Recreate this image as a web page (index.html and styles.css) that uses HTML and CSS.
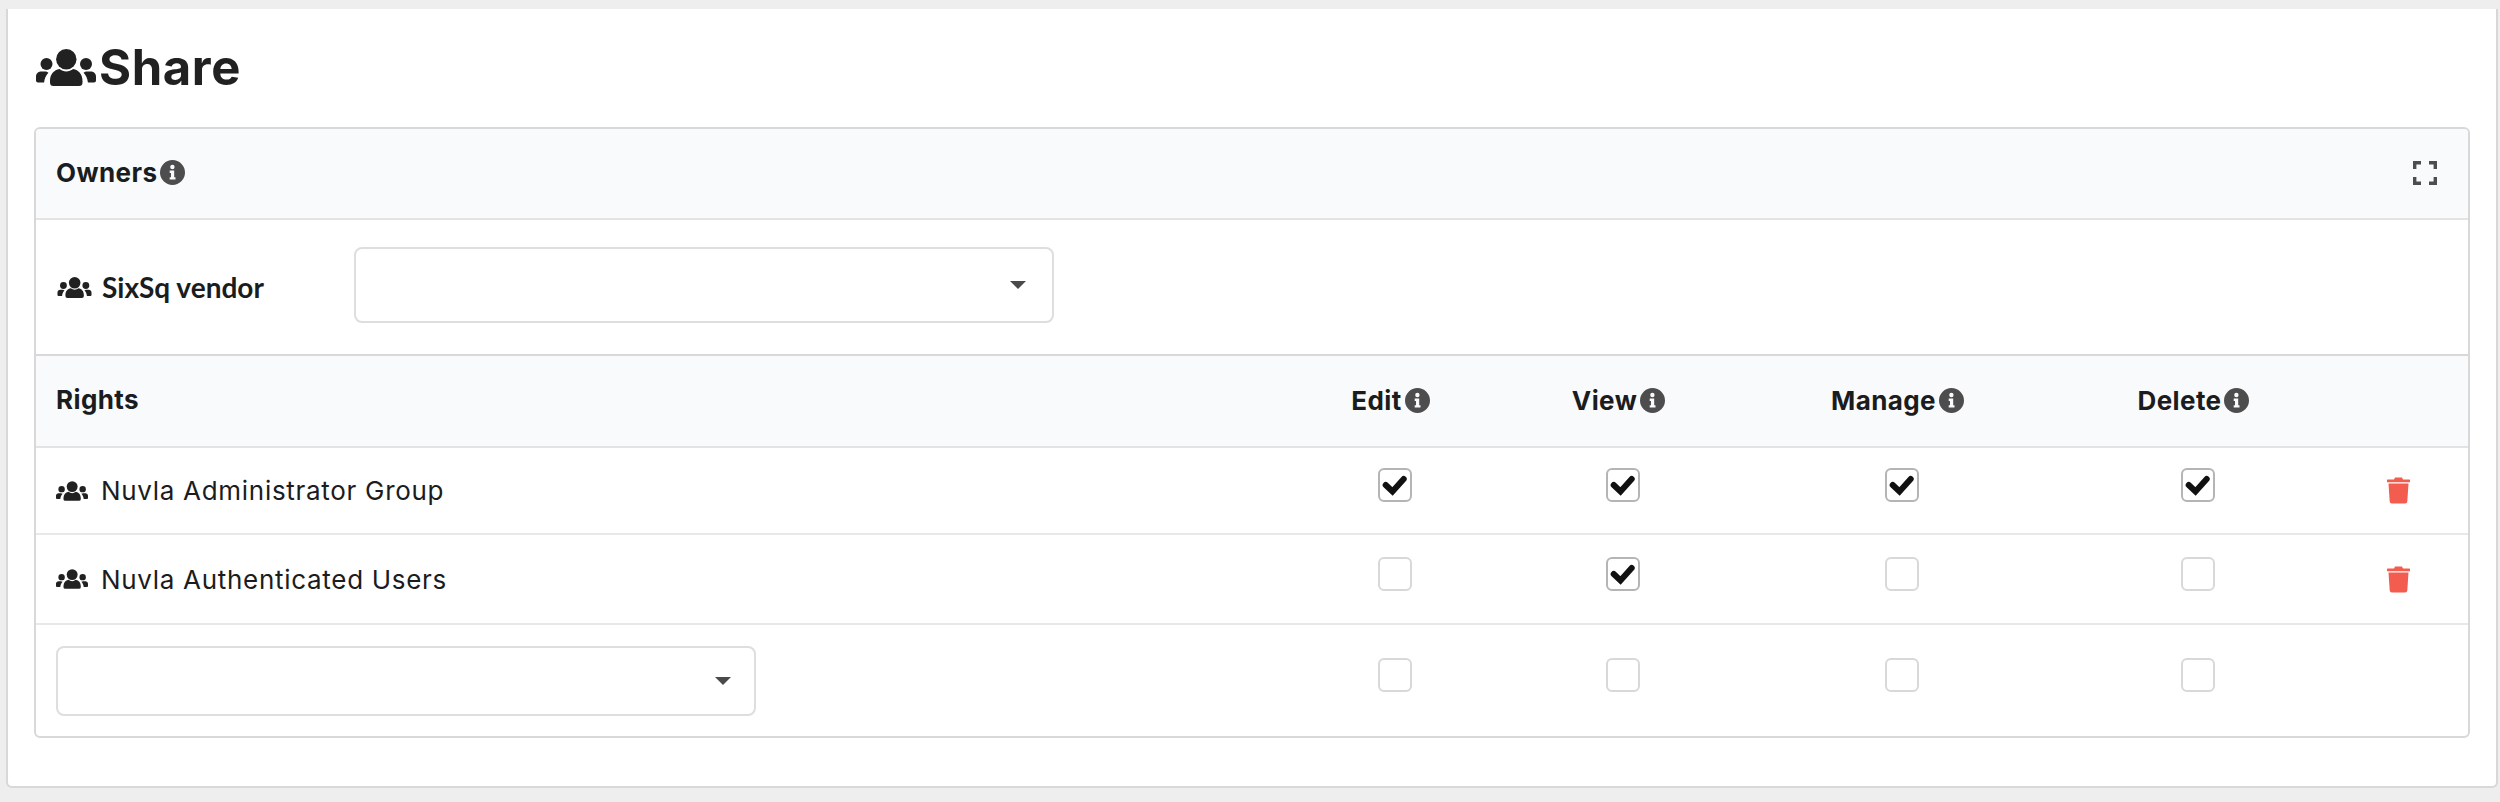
FILE: index.html
```html
<!DOCTYPE html>
<html lang="en">
<head>
<meta charset="utf-8">
<title>Share</title>
<link rel="stylesheet" href="styles.css">
</head>
<body>
<svg class="defs" aria-hidden="true">
  <symbol id="users" viewBox="0 0 60 37">
    <circle cx="30.3" cy="10.2" r="10.2"/>
    <circle cx="10.5" cy="15" r="6"/>
    <circle cx="50" cy="15" r="6"/>
    <path d="M14 32c0-7 4-11 9.500-12 2 1.500 4.300 2.500 6.800 2.500s4.800-1 6.800-2.500c5.500 1 9.400 5 9.400 12v1.500a3.500 3.500 0 0 1-3.500 3.500h-25.500a3.500 3.500 0 0 1-3.500-3.500z"/>
    <path d="M0 27.500c0-2.800 2.200-5 5-5h4c1.300 0 2.500.5 3.400 1.300-2.300 2.400-3.900 5.500-4.300 9.700h-6.100a2 2 0 0 1-2-2z"/>
    <path d="M60 27.500c0-2.800-2.200-5-5-5h-4c-1.300 0-2.500.5-3.400 1.300 2.300 2.400 3.900 5.500 4.300 9.700h6.100a2 2 0 0 0 2-2z"/>
  </symbol>
  <symbol id="info" viewBox="0 0 25 25">
    <path fill-rule="evenodd" d="M12.500 0a12.500 12.500 0 1 1 0 25a12.500 12.500 0 0 1 0-25zM12.400 4.800a2.200 2.200 0 1 0 0 4.400a2.200 2.200 0 0 0 0-4.400zM9.700 10.600v2.300h1.300v4.300h-1.300v2.300h5.800v-2.300h-1.300v-6.600z"/>
  </symbol>
  <symbol id="check" viewBox="0 0 30 30">
    <path d="M5.700 15l6.800 6.500L23.700 9" fill="none" stroke="currentColor" stroke-width="6" stroke-linecap="round" stroke-linejoin="miter"/>
  </symbol>
  <symbol id="trash" viewBox="0 0 23 27">
    <path d="M8 .5h7l1 2h6.200a.8.800 0 0 1 0 2.800H.800a.8.800 0 0 1 0-2.800H7z"/>
    <path d="M1.500 6.500h20l-1.200 18a2.200 2.200 0 0 1-2.200 2H4.900a2.200 2.200 0 0 1-2.200-2z"/>
  </symbol>
</svg>

<main class="card">
  <h1 class="title">
    <svg class="title-icon"><use href="#users"/></svg>
    <span class="title-text">Share</span>
  </h1>

  <section class="segment">
    <header class="segment-head">
      <div class="label-info">
        <strong>Owners</strong>
        <svg class="info"><use href="#info"/></svg>
      </div>
      <svg class="expand" viewBox="0 0 24 24" aria-label="Expand">
        <path d="M1.700 8V1.700H8M16 1.700h6.300V8M22.300 16v6.300H16M8 22.300H1.700V16" fill="none" stroke="currentColor" stroke-width="3.400"/>
      </svg>
    </header>

    <div class="owner-row">
      <div class="owner-name">
        <svg class="owner-icon"><use href="#users"/></svg>
        <span>SixSq vendor</span>
      </div>
      <div class="select select-wide"><i class="caret"></i></div>
    </div>

    <div class="rights">
      <div class="grid head-row">
        <div class="cell-name"><strong>Rights</strong></div>
        <div class="cell-head"><strong>Edit</strong><svg class="info"><use href="#info"/></svg></div>
        <div class="cell-head"><strong>View</strong><svg class="info"><use href="#info"/></svg></div>
        <div class="cell-head"><strong>Manage</strong><svg class="info"><use href="#info"/></svg></div>
        <div class="cell-head"><strong>Delete</strong><svg class="info"><use href="#info"/></svg></div>
        <div></div>
      </div>

      <div class="grid body-row row-a">
        <div class="cell-name"><svg class="row-icon"><use href="#users"/></svg><span>Nuvla Administrator Group</span></div>
        <div class="cell-check"><span class="box on"><svg><use href="#check"/></svg></span></div>
        <div class="cell-check"><span class="box on"><svg><use href="#check"/></svg></span></div>
        <div class="cell-check"><span class="box on"><svg><use href="#check"/></svg></span></div>
        <div class="cell-check"><span class="box on"><svg><use href="#check"/></svg></span></div>
        <div class="cell-trash"><svg class="trash"><use href="#trash"/></svg></div>
      </div>

      <div class="grid body-row row-b">
        <div class="cell-name"><svg class="row-icon"><use href="#users"/></svg><span>Nuvla Authenticated Users</span></div>
        <div class="cell-check"><span class="box"></span></div>
        <div class="cell-check"><span class="box on"><svg><use href="#check"/></svg></span></div>
        <div class="cell-check"><span class="box"></span></div>
        <div class="cell-check"><span class="box"></span></div>
        <div class="cell-trash"><svg class="trash"><use href="#trash"/></svg></div>
      </div>

      <div class="grid body-row row-c">
        <div class="cell-name"><div class="select select-add"><i class="caret"></i></div></div>
        <div class="cell-check"><span class="box"></span></div>
        <div class="cell-check"><span class="box"></span></div>
        <div class="cell-check"><span class="box"></span></div>
        <div class="cell-check"><span class="box"></span></div>
        <div></div>
      </div>
    </div>
  </section>
</main>
</body>
</html>
```

FILE: styles.css
```css
* { box-sizing: border-box; }

html, body { height: 100%; }

body {
  margin: 0;
  padding: 9px 2px 14px 6px;
  background: #eeeeee;
  color: #1b1c1d;
  font-family: "Inter", "Liberation Sans", sans-serif;
  font-size: 26px;
  letter-spacing: 0.7px;
  overflow: hidden;
}

.defs { display: none; }

.card {
  background: #fff;
  border: 2px solid #d8d8d9;
  border-top: 0;
  border-radius: 0 0 6px 6px;
  padding: 36px 26px 48px 26px;
  height: 779px;
}

.title {
  display: flex;
  align-items: center;
  gap: 3px;
  height: 44px;
  margin: 0 0 38px;
  padding-left: 2px;
  font-size: 49px;
  font-weight: 700;
  line-height: 44px;
  letter-spacing: 0.6px;
  color: #212121;
}

.title-text { padding-top: 2px; }

.title-icon { width: 60px; height: 37px; fill: #212121; }

.segment {
  border: 2px solid #d8d8d9;
  border-radius: 6px;
  height: 611px;
  overflow: hidden;
}

.segment-head {
  display: flex;
  align-items: center;
  justify-content: space-between;
  height: 91px;
  padding: 0 31px 2px 20px;
  background: #f9fafb;
  border-bottom: 2px solid #e3e3e4;
}

strong { font-weight: 700; letter-spacing: 0.4px; }

.label-info { display: flex; align-items: center; gap: 3px; }

.info { width: 25px; height: 25px; fill: #4d4d4d; flex: none; }

.expand { width: 24px; height: 24px; color: #4d4d4d; }

.owner-row {
  display: flex;
  align-items: center;
  height: 136px;
  padding-left: 21px;
  border-bottom: 2px solid #d8d8d9;
}

.owner-name {
  display: flex;
  align-items: center;
  gap: 10px;
  width: 297px;
  font-family: "Lato", sans-serif;
  font-weight: 700;
  font-size: 28px;
  letter-spacing: 0;
}

.owner-icon { width: 35px; height: 21px; fill: #212121; flex: none; }

.select {
  display: flex;
  align-items: center;
  justify-content: flex-end;
  background: #fff;
  border: 2px solid #dededf;
  border-radius: 8px;
}

.select-wide { width: 700px; height: 76px; padding-right: 26px; margin-bottom: 5px; }

.select-add { width: 700px; height: 70px; padding-right: 23px; }

.caret {
  width: 0;
  height: 0;
  border-left: 8px solid transparent;
  border-right: 8px solid transparent;
  border-top: 8px solid #4a4a4a;
}

.grid {
  display: grid;
  grid-template-columns: 1245px 228px 228px 330px 262px 139px;
  align-items: center;
}

.head-row {
  height: 92px;
  padding-bottom: 2px;
  background: #f9fafb;
  border-bottom: 2px solid #e3e3e4;
}

.head-row .cell-name { padding-bottom: 2px; }

.body-row { border-bottom: 2px solid #e8e8e9; }

.row-a { height: 87px; }
.row-b { height: 90px; }
.row-c { height: 111px; border-bottom: 0; }

.cell-name {
  display: flex;
  align-items: center;
  gap: 13px;
  padding-left: 20px;
}

.row-icon { width: 32px; height: 20px; fill: #212121; flex: none; }

.cell-head {
  display: flex;
  align-items: center;
  justify-content: center;
  gap: 3px;
  padding-right: 9px;
}

.cell-check {
  display: flex;
  justify-content: center;
  padding-bottom: 11px;
}

.box {
  display: block;
  width: 34px;
  height: 34px;
  border: 2px solid #d8d8d9;
  border-radius: 6px;
  background: #fff;
  color: #111;
}

.box.on { border-color: #b5b5b6; }

.box svg { display: block; width: 30px; height: 30px; }

.cell-trash { display: flex; justify-content: center; }

.trash { width: 23px; height: 27px; fill: #f25d50; }
```
